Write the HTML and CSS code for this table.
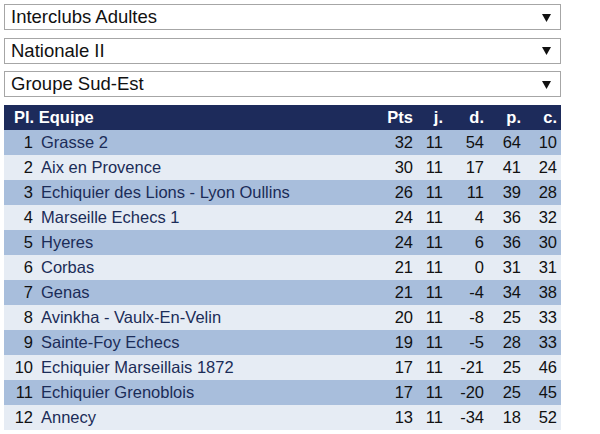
FILE: index.html
```html
<!DOCTYPE html>
<html lang="fr">
<head>
<meta charset="utf-8">
<title>Interclubs</title>
<link rel="stylesheet" href="styles.css">
</head>
<body>
<div class="page">
  <div class="select"><span>Interclubs Adultes</span><svg class="arrow" width="9" height="8" viewBox="0 0 9 8"><path d="M0 0H9L4.5 8Z"/></svg></div>
  <div class="select"><span>Nationale II</span><svg class="arrow" width="9" height="8" viewBox="0 0 9 8"><path d="M0 0H9L4.5 8Z"/></svg></div>
  <div class="select"><span>Groupe Sud-Est</span><svg class="arrow" width="9" height="8" viewBox="0 0 9 8"><path d="M0 0H9L4.5 8Z"/></svg></div>
  <table class="standings">
    <colgroup>
      <col class="c-rank"><col class="c-team"><col class="c-pts"><col class="c-j"><col class="c-d"><col class="c-p"><col class="c-c">
    </colgroup>
    <thead>
      <tr><th colspan="2" class="left">Pl. Equipe</th><th>Pts</th><th>j.</th><th>d.</th><th>p.</th><th>c.</th></tr>
    </thead>
    <tbody>
      <tr><td>1</td><td class="team">Grasse 2</td><td>32</td><td>11</td><td>54</td><td>64</td><td>10</td></tr>
      <tr><td>2</td><td class="team">Aix en Provence</td><td>30</td><td>11</td><td>17</td><td>41</td><td>24</td></tr>
      <tr><td>3</td><td class="team">Echiquier des Lions - Lyon Oullins</td><td>26</td><td>11</td><td>11</td><td>39</td><td>28</td></tr>
      <tr><td>4</td><td class="team">Marseille Echecs 1</td><td>24</td><td>11</td><td>4</td><td>36</td><td>32</td></tr>
      <tr><td>5</td><td class="team">Hyeres</td><td>24</td><td>11</td><td>6</td><td>36</td><td>30</td></tr>
      <tr><td>6</td><td class="team">Corbas</td><td>21</td><td>11</td><td>0</td><td>31</td><td>31</td></tr>
      <tr><td>7</td><td class="team">Genas</td><td>21</td><td>11</td><td>-4</td><td>34</td><td>38</td></tr>
      <tr><td>8</td><td class="team">Avinkha - Vaulx-En-Velin</td><td>20</td><td>11</td><td>-8</td><td>25</td><td>33</td></tr>
      <tr><td>9</td><td class="team">Sainte-Foy Echecs</td><td>19</td><td>11</td><td>-5</td><td>28</td><td>33</td></tr>
      <tr><td>10</td><td class="team">Echiquier Marseillais 1872</td><td>17</td><td>11</td><td>-21</td><td>25</td><td>46</td></tr>
      <tr><td>11</td><td class="team">Echiquier Grenoblois</td><td>17</td><td>11</td><td>-20</td><td>25</td><td>45</td></tr>
      <tr><td>12</td><td class="team">Annecy</td><td>13</td><td>11</td><td>-34</td><td>18</td><td>52</td></tr>
    </tbody>
  </table>
</div>
</body>
</html>
```
FILE: styles.css
```css
html, body {
  margin: 0;
  padding: 0;
  background: #ffffff;
}
body {
  font-family: "Liberation Sans", Arial, sans-serif;
  color: #111111;
}
.page {
  width: 557px;
  padding: 4px 0 0 4px;
  display: flex;
  flex-direction: column;
}
.select {
  box-sizing: border-box;
  height: 26px;
  border: 1px solid #a6a6a6;
  background: #ffffff;
  display: flex;
  align-items: center;
  justify-content: space-between;
  padding: 0 9px 0 6px;
  font-size: 18.5px;
  color: #111111;
  margin-bottom: 7.5px;
}
.select span {
  line-height: 24px;
}
.arrow {
  fill: #111111;
  margin-top: 1px;
}
.standings {
  margin-top: 0.5px;
  width: 557px;
  border-collapse: collapse;
  table-layout: fixed;
  font-size: 16.5px;
}
.c-rank { width: 33px; }
.c-pts { width: 37px; }
.c-j { width: 30px; }
.c-d { width: 41px; }
.c-p { width: 37px; }
.c-c { width: 36px; }
.standings th,
.standings td {
  height: 25px;
  padding: 0 4px 0 0;
  text-align: right;
  white-space: nowrap;
  box-sizing: border-box;
}
.standings th {
  background: #1d2b5b;
  color: #ffffff;
  font-weight: bold;
}
.standings th.left {
  text-align: left;
  padding-left: 10px;
}
.standings td.team {
  text-align: left;
  padding-left: 4px;
  color: #1b2c58;
}
.standings tbody tr:nth-child(odd) {
  background: #a8bedc;
}
.standings tbody tr:nth-child(even) {
  background: #e6ecf4;
}
```
